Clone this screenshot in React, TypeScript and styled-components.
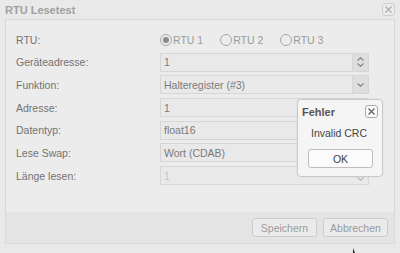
import styled, { createGlobalStyle } from 'styled-components';

const GlobalStyle = createGlobalStyle`
    html, body {
        margin: 0;
        padding: 0;
        background: #e9e9e9;
    }
    body {
        font-family: 'Liberation Sans', Arial, sans-serif;
        font-size: 10px;
    }
`;

const Window = styled.div`
    position: relative;
    width: 400px;
    height: 253px;
    display: flex;
    flex-direction: column;
    background: #e9e9e9;
    overflow: hidden;
`;

const TitleBar = styled.div`
    height: 19px;
    display: flex;
    align-items: center;
    justify-content: space-between;
    padding: 0 5px 0 5px;
`;

const Title = styled.span`
    font-weight: bold;
    font-size: 11px;
    color: #a0a0a0;
`;

const CloseBox = styled.div<{ dark?: boolean }>`
    width: 11px;
    height: 11px;
    border: 1px solid ${({ dark }) => (dark ? '#aaa' : '#cfcfcf')};
    border-radius: 3px;
    background: ${({ dark }) => (dark ? '#fafafa' : '#ececec')};
    display: flex;
    align-items: center;
    justify-content: center;
    svg {
        display: block;
    }
`;

const Panel = styled.div`
    margin: 0 5px;
    height: 223px;
    border: 1px solid #d9d9d9;
    background: #ececec;
    display: flex;
    flex-direction: column;
`;

const Form = styled.div`
    flex: 1;
    padding: 10px 25px 0 10px;
    display: flex;
    flex-direction: column;
    gap: 3.7px;
`;

const Row = styled.div`
    height: 19px;
    display: flex;
    align-items: center;
`;

const Label = styled.div`
    width: 144px;
    color: #727272;
    font-size: 10.5px;
`;

const Field = styled.div<{ disabled?: boolean }>`
    flex: 1;
    height: 17px;
    border: 1px solid #d6d6d6;
    background: #e9e9e9;
    display: flex;
    align-items: stretch;
    color: ${({ disabled }) => (disabled ? '#c4c4c4' : '#7a7a7a')};
    font-size: 10.5px;
`;

const FieldText = styled.div`
    flex: 1;
    display: flex;
    align-items: center;
    padding-left: 3px;
`;

const FieldButton = styled.div<{ faded?: boolean }>`
    width: 15px;
    background: ${({ faded }) => (faded ? '#e9e9e9' : '#dedede')};
    border-left: 1px solid ${({ faded }) => (faded ? '#e9e9e9' : '#d6d6d6')};
    display: flex;
    flex-direction: column;
    align-items: center;
    justify-content: center;
    gap: 2px;
`;

const RadioGroup = styled.div`
    display: flex;
    gap: 17px;
`;

const RadioItem = styled.label`
    display: flex;
    align-items: center;
    gap: 1px;
    color: #9a9a9a;
    font-size: 10.5px;
`;

const RadioCircle = styled.span<{ checked?: boolean }>`
    width: 10px;
    height: 10px;
    border: 1px solid #a8a8a8;
    border-radius: 50%;
    display: flex;
    align-items: center;
    justify-content: center;
    background: #ececec;
    &::after {
        content: '';
        width: 6px;
        height: 6px;
        border-radius: 50%;
        background: ${({ checked }) => (checked ? '#8a8a8a' : 'transparent')};
    }
`;

const Footer = styled.div`
    height: 31px;
    background: #e4e4e4;
    display: flex;
    justify-content: flex-end;
    align-items: center;
    gap: 6px;
    padding-right: 6px;
`;

const Button = styled.button<{ w?: number }>`
    width: ${({ w }) => w ?? 65}px;
    height: 19px;
    padding: 0;
    border: 1px solid #cdcdcd;
    border-radius: 3px;
    background: #ebebeb;
    color: #9a9a9a;
    font-family: 'Liberation Sans', Arial, sans-serif;
    font-size: 10.5px;
`;

const Popup = styled.div`
    position: absolute;
    left: 297px;
    top: 99px;
    width: 84px;
    height: 76px;
    border: 1px solid #c9c9c9;
    border-radius: 4px;
    background: #f5f5f5;
    box-shadow: 0 0 2px rgba(0, 0, 0, 0.08);
    display: flex;
    flex-direction: column;
`;

const PopupHead = styled.div`
    height: 17px;
    padding: 3px 4px 0 4px;
    display: flex;
    justify-content: space-between;
    align-items: center;
`;

const PopupTitle = styled.span`
    font-weight: bold;
    font-size: 11px;
    color: #555;
`;

const Message = styled.div`
    padding: 7px 0 0 13px;
    color: #444;
    font-size: 10.5px;
`;

const OkButton = styled(Button)`
    margin: 10px 0 0 10px;
    background: #fbfbfb;
    border-color: #bdbdbd;
    color: #444;
`;

const Cursor = styled.svg`
    position: absolute;
    left: 352px;
    top: 248px;
`;

const Chevron = ({ up, color = '#8a8a8a' }: { up?: boolean; color?: string }) => (
    <svg width="7" height="4" viewBox="0 0 7 4">
        <path d={up ? 'M0.5 3.5 L3.5 0.7 L6.5 3.5' : 'M0.5 0.5 L3.5 3.3 L6.5 0.5'} fill="none" stroke={color} strokeWidth="1.2" />
    </svg>
);

const Cross = ({ color }: { color: string }) => (
    <svg width="7" height="7" viewBox="0 0 7 7">
        <path d="M0.5 0.5 L6.5 6.5 M6.5 0.5 L0.5 6.5" stroke={color} strokeWidth="1.3" />
    </svg>
);

const rows: { label: string; value: string; kind: 'spin' | 'select' | 'disabled' }[] = [
    { label: 'Geräteadresse:', value: '1', kind: 'spin' },
    { label: 'Funktion:', value: 'Halteregister (#3)', kind: 'select' },
    { label: 'Adresse:', value: '1', kind: 'spin' },
    { label: 'Datentyp:', value: 'float16', kind: 'select' },
    { label: 'Lese Swap:', value: 'Wort (CDAB)', kind: 'select' },
    { label: 'Länge lesen:', value: '1', kind: 'disabled' },
];

export default function App() {
    return (
        <>
            <GlobalStyle />
            <Window>
                <TitleBar>
                    <Title>RTU Lesetest</Title>
                    <CloseBox>
                        <Cross color="#b0b0b0" />
                    </CloseBox>
                </TitleBar>
                <Panel>
                    <Form>
                        <Row>
                            <Label>RTU:</Label>
                            <RadioGroup>
                                <RadioItem>
                                    <RadioCircle checked />
                                    RTU 1
                                </RadioItem>
                                <RadioItem>
                                    <RadioCircle />
                                    RTU 2
                                </RadioItem>
                                <RadioItem>
                                    <RadioCircle />
                                    RTU 3
                                </RadioItem>
                            </RadioGroup>
                        </Row>
                        {rows.map((r) => (
                            <Row key={r.label}>
                                <Label>{r.label}</Label>
                                <Field disabled={r.kind === 'disabled'}>
                                    <FieldText>{r.value}</FieldText>
                                    {r.kind === 'spin' && (
                                        <FieldButton>
                                            <Chevron up />
                                            <Chevron />
                                        </FieldButton>
                                    )}
                                    {r.kind === 'select' && (
                                        <FieldButton>
                                            <Chevron />
                                        </FieldButton>
                                    )}
                                    {r.kind === 'disabled' && (
                                        <FieldButton faded>
                                            <Chevron up color="#e0e0e0" />
                                            <Chevron color="#bdbdbd" />
                                        </FieldButton>
                                    )}
                                </Field>
                            </Row>
                        ))}
                    </Form>
                    <Footer>
                        <Button>Speichern</Button>
                        <Button>Abbrechen</Button>
                    </Footer>
                </Panel>
                <Popup>
                    <PopupHead>
                        <PopupTitle>Fehler</PopupTitle>
                        <CloseBox dark>
                            <Cross color="#666" />
                        </CloseBox>
                    </PopupHead>
                    <Message>Invalid CRC</Message>
                    <OkButton>OK</OkButton>
                </Popup>
                <Cursor width="4" height="5" viewBox="0 0 4 5">
                    <path d="M1 0 L1 5 L3 5 Z" fill="#222" />
                </Cursor>
            </Window>
        </>
    );
}
